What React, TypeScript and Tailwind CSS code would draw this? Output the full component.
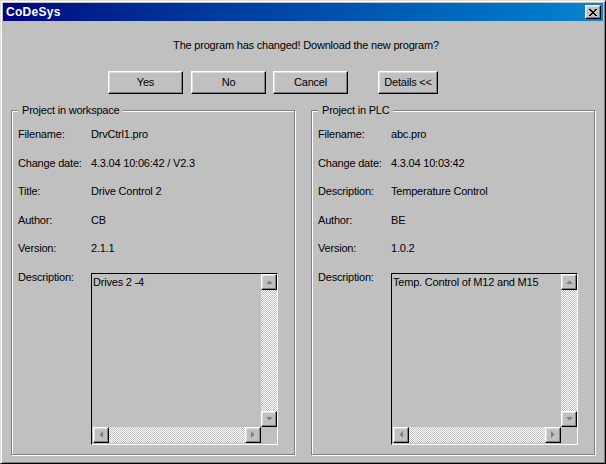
import React from "react";

const font = "font-['Liberation_Sans',Arial,sans-serif]";

// classic raised 3D button edges
const raised =
  "border border-t-white border-l-white border-r-black border-b-black shadow-[inset_-1px_-1px_0_#808080,inset_1px_1px_0_#dfdfdf]";

function Arrow({ dir }: { dir: "up" | "down" | "left" | "right" }) {
  const pts = {
    up: "0,4 7,4 3.5,0.5",
    down: "0,0 7,0 3.5,3.5",
    left: "4,0 4,7 0.5,3.5",
    right: "0,0 0,7 3.5,3.5",
  }[dir];
  const horiz = dir === "left" || dir === "right";
  return (
    <svg width={horiz ? 4 : 7} height={horiz ? 7 : 4} viewBox={horiz ? "0 0 4 7" : "0 0 7 4"}>
      <polygon points={pts} fill="#808080" />
    </svg>
  );
}

function ScrollBtn({ dir }: { dir: "up" | "down" | "left" | "right" }) {
  return (
    <div className={`w-[16px] h-[16px] shrink-0 bg-[#c0c0c0] flex items-center justify-center ${raised}`}>
      <Arrow dir={dir} />
    </div>
  );
}

const track =
  "bg-[repeating-conic-gradient(#ffffff_0_25%,#c0c0c0_0_50%)] bg-[length:2px_2px]";

function TextBox({ text }: { text: string }) {
  return (
    <div className="w-[187px] h-[172px] border border-t-black border-l-black border-r-white border-b-white bg-[#c0c0c0] flex flex-col">
      <div className="flex flex-1 min-h-0">
        <div className="flex-1 pl-[1px] pt-[2px] leading-[13px] text-black">{text}</div>
        <div className="w-[16px] flex flex-col">
          <ScrollBtn dir="up" />
          <div className={`flex-1 ${track}`} />
          <ScrollBtn dir="down" />
        </div>
      </div>
      <div className="flex h-[17px] pl-[1px] pb-[1px]">
        <ScrollBtn dir="left" />
        <div className={`flex-1 ${track}`} />
        <ScrollBtn dir="right" />
        <div className="w-[16px]" />
      </div>
    </div>
  );
}

type Row = [string, string];

function Group({ title, rows, description }: { title: string; rows: Row[]; description: string }) {
  return (
    <div className="relative w-[284px] h-[345px] border border-[#808080] shadow-[inset_1px_1px_0_#fff,1px_1px_0_#fff]">
      <span className="absolute left-[6px] top-[-7px] bg-[#c0c0c0] pl-[4px] pr-[3px] leading-[13px]">
        {title}
      </span>
      <div className="pl-[6px] pt-[17px] flex flex-col">
        {rows.map(([k, v]) => (
          <div key={k} className="flex h-[28.6px] leading-[13px]">
            <span className="w-[73px] shrink-0">{k}</span>
            <span>{v}</span>
          </div>
        ))}
        <div className="flex leading-[13px]">
          <span className="w-[73px] shrink-0 pt-[0px]">Description:</span>
          <div className="mt-[2px]">
            <TextBox text={description} />
          </div>
        </div>
      </div>
    </div>
  );
}

function Button({ label, w, className = "" }: { label: string; w: string; className?: string }) {
  return (
    <button className={`${w} h-[23px] bg-[#c0c0c0] text-black ${raised} ${className}`}>{label}</button>
  );
}

export default function App() {
  return (
    <div
      className={`w-[606px] h-[464px] bg-[#c0c0c0] border border-t-[#dfdfdf] border-l-[#dfdfdf] border-r-black border-b-black shadow-[inset_1px_1px_0_#fff,inset_-1px_-1px_0_#808080] p-[2px] text-[11px] tracking-[-0.2px] text-black ${font}`}
    >
      {/* Title bar */}
      <div className="h-[18px] bg-linear-to-r from-[#000080] to-[#1084d0] flex items-center justify-between pl-[3px] pr-[2px]">
        <span className="text-white font-bold text-[12px] tracking-[0.3px]">CoDeSys</span>
        <div className={`w-[16px] h-[14px] bg-[#c0c0c0] flex items-center justify-center ${raised}`}>
          <svg width="8" height="7" viewBox="0 0 8 7" shapeRendering="crispEdges">
            <path
              d="M0 0h2v1H0zM6 0h2v1H6zM1 1h2v1H1zM5 1h2v1H5zM2 2h4v1H2zM3 3h2v1H3zM2 4h4v1H2zM1 5h2v1H1zM5 5h2v1H5zM0 6h2v1H0zM6 6h2v1H6z"
              fill="#000"
            />
          </svg>
        </div>
      </div>

      <p className="mt-[18px] h-[13px] leading-[13px] text-center pl-[6px]">
        The program has changed! Download the new program?
      </p>

      <div className="mt-[19px] flex pl-[105px]">
        <Button label="Yes" w="w-[75px]" />
        <Button label="No" w="w-[75px]" className="ml-[8px]" />
        <Button label="Cancel" w="w-[75px]" className="ml-[7px]" />
        <Button label="Details <<" w="w-[60px]" className="ml-[30px]" />
      </div>

      <div className="mt-[16px] flex gap-[16px] pl-[8px]">
        <Group
          title="Project in workspace"
          rows={[
            ["Filename:", "DrvCtrl1.pro"],
            ["Change date:", "4.3.04 10:06:42 / V2.3"],
            ["Title:", "Drive Control 2"],
            ["Author:", "CB"],
            ["Version:", "2.1.1"],
          ]}
          description="Drives 2 -4"
        />
        <Group
          title="Project in PLC"
          rows={[
            ["Filename:", "abc.pro"],
            ["Change date:", "4.3.04 10:03:42"],
            ["Description:", "Temperature Control"],
            ["Author:", "BE"],
            ["Version:", "1.0.2"],
          ]}
          description="Temp. Control of M12 and M15"
        />
      </div>
    </div>
  );
}
